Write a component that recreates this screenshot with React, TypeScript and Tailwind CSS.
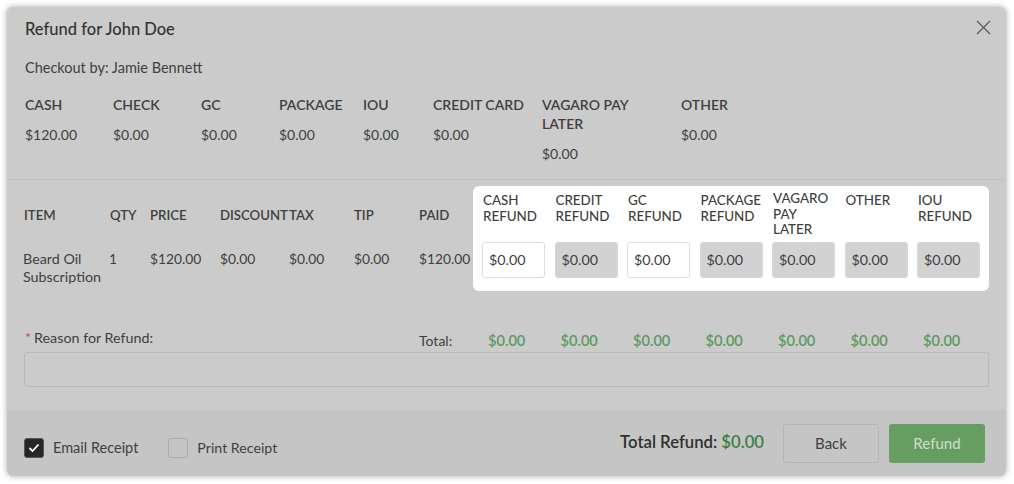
import React from "react";

const summary = [
  { l: "CASH", v: "$120.00", w: "w-[88px]" },
  { l: "CHECK", v: "$0.00", w: "w-[88px]" },
  { l: "GC", v: "$0.00", w: "w-[78px]" },
  { l: "PACKAGE", v: "$0.00", w: "w-[84px]" },
  { l: "IOU", v: "$0.00", w: "w-[70px]" },
  { l: "CREDIT CARD", v: "$0.00", w: "w-[109px]" },
  { l: "VAGARO PAY LATER", v: "$0.00", w: "w-[139px] pr-[30px]" },
  { l: "OTHER", v: "$0.00", w: "w-[100px]" },
];
const leftCols = "grid grid-cols-[86px_40px_70px_69px_65px_65px_54px]";
const panelCols = "grid grid-cols-7 gap-x-[9.5px]";
const refund = [
  { l: "CASH REFUND", on: true },
  { l: "CREDIT REFUND", on: false },
  { l: "GC REFUND", on: true },
  { l: "PACKAGE REFUND", on: false },
  { l: "VAGARO PAY LATER", on: false },
  { l: "OTHER", on: false },
  { l: "IOU REFUND", on: false },
];

export default function App() {
  return (
    <div className="w-[1014px] h-[484px] bg-white p-[7px] overflow-hidden font-['Lato','Liberation_Sans',sans-serif] text-[14.3px] text-[#3f3f3f]">
      <div className="w-[999px] h-[469px] rounded-md bg-[#cbcbcb] shadow-[0_0_6px_rgba(0,0,0,0.35)] flex flex-col overflow-hidden">
        <div className="shrink-0 px-[17px] pt-[10px]">
          <div className="flex items-center justify-between">
            <h1 className="text-[16.5px] leading-6 font-medium text-[#333] pl-px">Refund for John Doe</h1>
            <svg width="15" height="15" viewBox="0 0 15 15" className="mr-[-2px] mt-[-4px]" stroke="#555" strokeWidth="1.1" fill="none">
              <path d="M1 1L14 14M14 1L1 14" />
            </svg>
          </div>
          <div className="mt-[17px] leading-5 pl-px text-[14.5px]">Checkout by: Jamie Bennett</div>
          <div className="mt-[17px] flex items-start pl-px h-[84px]">
            {summary.map((s) => (
              <div key={s.l} className={s.w}>
                <div className="font-semibold leading-[19px] text-[14px]">{s.l}</div>
                <div className="mt-[11px] leading-[19px] text-[14px]">{s.v}</div>
              </div>
            ))}
          </div>
        </div>
        <div className="h-px bg-[#c2c2c2] shrink-0" />
        <div className="px-[17px] pt-[6px] shrink-0">
          <div className="flex items-start">
            <div className="w-[449px] pt-[20px]">
              <div className={`${leftCols} font-semibold leading-[19px] text-[13.2px]`}>
                {["ITEM", "QTY", "PRICE", "DISCOUNT", "TAX", "TIP", "PAID"].map((h) => (
                  <div key={h}>{h}</div>
                ))}
              </div>
              <div className={`${leftCols} mt-[25px] leading-[18px] text-[13.8px]`}>
                <div className="-ml-px text-[14.3px]">Beard Oil Subscription</div>
                <div className="-ml-px">1</div>
                <div>$120.00</div>
                <div>$0.00</div>
                <div>$0.00</div>
                <div>$0.00</div>
                <div className="whitespace-nowrap">$120.00</div>
              </div>
            </div>
            <div className="w-[516px] h-[105px] bg-white rounded-md px-[9px] pt-[6px]">
              <div className={`${panelCols} h-[50px] items-start`}>
                {refund.map((r) => (
                  <div key={r.l} className={`pl-px font-medium text-[13.4px] leading-[15.5px] ${r.l.startsWith("VAGARO") ? "-mt-px" : "pt-px"}`}>
                    {r.l}
                  </div>
                ))}
              </div>
              <div className={`${panelCols} items-start`}>
                {refund.map((r) => (
                  <div
                    key={r.l}
                    className={`h-[36px] rounded-[3px] border px-[6px] leading-[34px] text-[14.3px] ${r.on ? "bg-white border-[#dedede]" : "bg-[#d2d2d2] border-[#d6d6d6]"}`}
                  >
                    $0.00
                  </div>
                ))}
              </div>
            </div>
          </div>
          <div className="flex items-end mt-[38px] h-[22px]">
            <div className="w-[395px] pl-px leading-5 text-[14.3px] pb-[3px]">
              <span className="text-[#b5534f] mr-[3px]">*</span>Reason for Refund:
            </div>
            <div className="w-[54px] leading-5 text-[14px]">Total:</div>
            <div className={`${panelCols} w-[516px] px-[9px]`}>
              {refund.map((r) => (
                <div key={r.l} className="pl-[6px] leading-5 font-semibold text-[14.6px] text-[#5b9a5e]">
                  $0.00
                </div>
              ))}
            </div>
          </div>
          <div className="mt-px h-[35px] rounded-[3px] border border-[#bababa]" />
        </div>
        <div className="flex-1 mt-[23px] bg-[#c5c5c5] flex items-center pl-[17px] pr-[21px]">
          <div className="w-5 h-5 mt-[9px] rounded-[3px] bg-[#262626] border border-[#555] flex items-center justify-center">
            <svg width="12" height="10" viewBox="0 0 12 10" fill="none" stroke="#fff" strokeWidth="1.8">
              <path d="M1.5 5L4.5 8L10.5 1.5" />
            </svg>
          </div>
          <span className="ml-[9px] mt-[9px] text-[14.5px]">Email Receipt</span>
          <div className="ml-[30px] mt-[9px] w-5 h-5 rounded-[3px] border border-[#aaaaaa]" />
          <span className="ml-[9px] mt-[9px] text-[14.2px]">Print Receipt</span>
          <div className="ml-auto font-semibold text-[16.7px] text-[#2f2f2f]">
            Total Refund: <span className="text-[#3f7f45]">$0.00</span>
          </div>
          <button className="ml-[19px] w-[96px] h-[39px] rounded-[3px] border border-[#b5b5b5] text-[15px] text-[#3f3f3f]">Back</button>
          <button className="ml-[10px] w-[96px] h-[39px] rounded-[3px] bg-[#659e60] text-[15px] font-medium text-[#c8dcc6]">Refund</button>
        </div>
      </div>
    </div>
  );
}
